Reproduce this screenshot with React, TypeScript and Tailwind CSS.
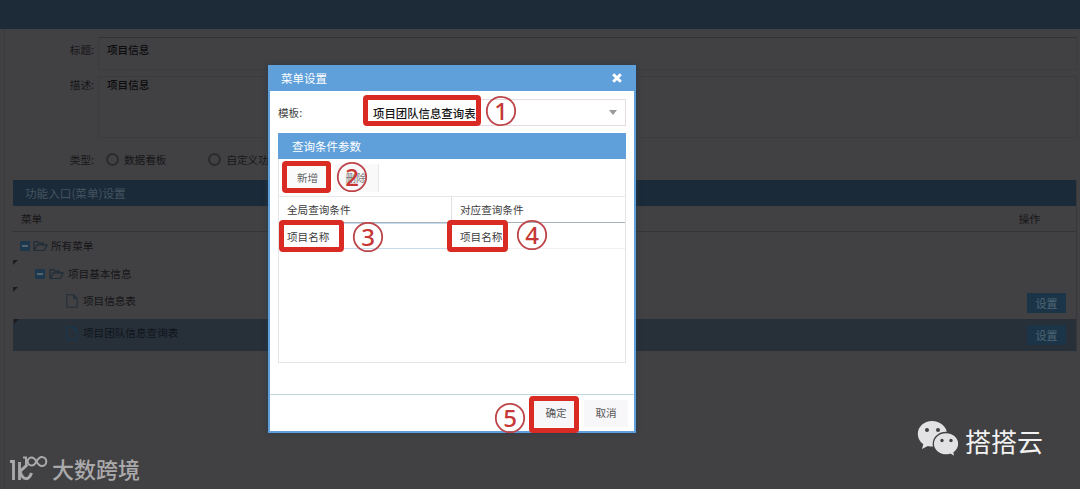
import React from "react";

function Folder() {
  return (
    <svg width="15" height="12" viewBox="0 0 15 12" fill="none" stroke="#1f2d38" strokeWidth="1.2" strokeLinejoin="round">
      <path d="M3.2 10.5 1 9.8V1.6h3.6l1.2 1.5h4.7v1.7M1.3 10.3 4.2 4.8h10l-3 5.7H1.3z" />
    </svg>
  );
}

function Doc({ color }: { color: string }) {
  return (
    <svg width="12" height="14" viewBox="0 0 12 14" fill="none" stroke={color} strokeWidth="1.1">
      <path d="M.8.8h7l3.4 3.6v8.8H.8zM7.8.8v3.6h3.4" />
    </svg>
  );
}

function Minus() {
  return (
    <span className="flex h-[10px] w-[10px] items-center justify-center rounded-[1px] bg-[#1d384d]">
      <span className="h-[2px] w-[6px] bg-[#526470]" />
    </span>
  );
}

function Corner({ className }: { className: string }) {
  return (
    <svg className={"absolute left-px " + className} width="5" height="5" viewBox="0 0 5 5">
      <path d="M0 0h5L0 5z" fill="#1d1d1f" />
    </svg>
  );
}

function Radio({ label }: { label: string }) {
  return (
    <span className="flex items-center">
      <span className="mr-[5px] h-[13px] w-[13px] rounded-full border-2 border-[#2b2b2d]" />
      {label}
    </span>
  );
}

function Frame({ className }: { className: string }) {
  return <div className={"absolute rounded-[4px] border-[5px] border-[#da2a24] " + className} />;
}

function Step({ n, className }: { n: string; className: string }) {
  return (
    <svg className={"absolute overflow-visible " + className} width="32" height="32" viewBox="0 0 32 32">
      <circle cx="16" cy="16" r="14.2" fill="none" stroke="#bd4448" strokeWidth="1.8" />
      <text x="16" y="24.500" textAnchor="middle" fontSize="24" fontWeight="500" fill="#c63735" fontFamily="'Noto Sans', sans-serif">
        {n}
      </text>
    </svg>
  );
}

function SetButton() {
  return (
    <span className="flex h-5 w-[39px] items-center justify-center bg-[#1b3448] text-[11px] text-[#4f6674]">设置</span>
  );
}

function Page() {
  return (
    <div className="flex h-full flex-col text-[10.6px] leading-[14px] text-[#161618]">
      <div className="h-[29px] shrink-0 bg-[#1c2b37]" />
      <div className="ml-[4px] flex grow flex-col border-l border-[#3a393b] pt-[8px] pl-[8px] pr-[3px]">
        <div className="flex h-[33px]">
          <span className="w-[85px] pr-[4px] pt-[6px] text-right">标题:</span>
          <div className="grow border border-[#3c3b3d] border-t-[#343334] pl-[8px] pt-[5px] font-medium text-[#0c0c0e]">项目信息</div>
        </div>
        <div className="mt-[6px] flex h-[62px]">
          <span className="w-[85px] pr-[4px] pt-[2px] text-right">描述:</span>
          <div className="grow border border-[#3c3b3d] pl-[8px] pt-px font-medium text-[#0c0c0e]">项目信息</div>
        </div>
        <div className="flex h-[42px] items-center pt-px">
          <span className="w-[85px] pr-[4px] text-right">类型:</span>
          <div className="flex gap-[42px] pl-[8px]">
            <Radio label="数据看板" />
            <Radio label="自定义功能" />
          </div>
        </div>
        <div className="-ml-px flex flex-col border-r border-[#38383a]">
          <div className="ml-px flex h-[26px] items-center bg-[#1b2a39] pl-[12px] text-[11.6px] text-[#44545f]">功能入口(菜单)设置</div>
          <div className="flex h-[26px] items-center justify-between border-b border-[#333539] pl-[9px] pr-[36px] pt-px">
            <span>菜单</span>
            <span>操作</span>
          </div>
          <div className="flex h-[28px] items-center pl-[8px]">
            <Minus />
            <span className="mx-[3px]"><Folder /></span>
            所有菜单
          </div>
          <div className="relative flex h-[27px] items-center pl-[23px]">
            <Corner className="top-0" />
            <Minus />
            <span className="mx-[4px]"><Folder /></span>
            项目基本信息
          </div>
          <div className="relative flex h-[32px] items-center pl-[54px] pr-[10px]">
            <Corner className="top-0" />
            <div className="flex grow items-center gap-[5px] pb-[5px]"><Doc color="#232f39" />项目信息表</div>
            <SetButton />
          </div>
          <div className="relative ml-px flex h-[32px] items-center bg-[#272f39] pl-[53px] pr-[10px] text-[#0f151b]">
            <Corner className="top-0" />
            <div className="flex grow items-center gap-[5px] pb-[4px]"><Doc color="#19384f" />项目团队信息查询表</div>
            <SetButton />
          </div>
        </div>
      </div>
    </div>
  );
}

function Dialog() {
  return (
    <div className="absolute left-[268px] top-[65px] flex h-[368px] w-[368px] flex-col border-2 border-t-0 border-[#5f9fda] bg-white text-[10.6px] leading-[14px] text-[#3c3c3c] shadow-[0_0_4px_#263c50]">
      <div className="flex h-[26px] shrink-0 items-center justify-between bg-[#5f9fda] pl-[11px] pr-[12px] text-[11.5px] text-white">
        菜单设置
        <svg width="10" height="10" viewBox="0 0 10 10" stroke="#fff" strokeWidth="3"><path d="m1.2 1.2 7.6 7.6M8.8 1.2 1.2 8.8" /></svg>
      </div>
      <div className="flex grow flex-col px-[8px] pt-[8px]">
        <div className="flex h-[27px] shrink-0 items-center">
          <span className="w-[87px]">模板:</span>
          <div className="flex h-full grow items-center justify-between border border-[#e4dcdf] pl-[7px] pr-[8px] font-medium text-[#161616]">
            <span className="text-[11.4px]">项目团队信息查询表</span>
            <span className="border-x-[4px] border-t-[5px] border-x-transparent border-t-[#999]" />
          </div>
        </div>
        <div className="mt-[7px] flex h-[230px] flex-col border border-t-0 border-[#e3e5e8]">
          <div className="-mx-px flex h-[26px] shrink-0 items-center bg-[#5f9fda] pl-[14px] text-[11.5px] text-white">查询条件参数</div>
          <div className="flex h-[37px] shrink-0 items-center gap-[4px] pl-[6px]">
            <span className="flex h-[28px] w-[45px] items-center justify-center bg-[#fafafb] text-[#666]">新增</span>
            <span className="flex h-[28px] w-[45px] items-center justify-center border-r border-[#e8e8e8] bg-[#f9f9fa] text-[#777]">删除</span>
          </div>
          <div className="flex h-[27px] shrink-0 border-y border-t-[#e5e7e9] border-b-[#abb1b8]">
            <span className="flex w-[173px] items-center border-r border-[#e0e2e4] pl-[8px]">全局查询条件</span>
            <span className="flex items-center pl-[8px]">对应查询条件</span>
          </div>
          <div className="flex h-[26px] shrink-0">
            <span className="flex w-[173px] items-center border-y border-r border-[#c7dcec] pl-[8px] pt-px">项目名称</span>
            <span className="flex grow items-center border-b border-[#f0f1f2] pl-[8px] pt-[2px]">项目名称</span>
          </div>
        </div>
      </div>
      <div className="flex h-[37px] shrink-0 items-center justify-end gap-[6px] border-t border-[#bdd9dc] pr-[6px] text-[#555]">
        <span className="flex h-[27px] w-[44px] items-center justify-center bg-[#f7f6f8]">确定</span>
        <span className="flex h-[27px] w-[44px] items-center justify-center bg-[#f7f6f8]">取消</span>
      </div>
    </div>
  );
}

export default function App() {
  return (
    <div className="relative h-[489px] w-[1080px] overflow-hidden bg-[#414042] font-['Noto_Sans_CJK_SC',sans-serif]">
      <Page />
      <Dialog />
      <Frame className="left-[363px] top-[95px] h-[31px] w-[118px]" />
      <Frame className="left-[282px] top-[161px] h-[32px] w-[49px]" />
      <Frame className="left-[279px] top-[220px] h-[32px] w-[65px]" />
      <Frame className="left-[447px] top-[220px] h-[32px] w-[61px]" />
      <Frame className="left-[529px] top-[396px] h-[37px] w-[50px]" />
      <Step n="1" className="left-[485px] top-[95px]" />
      <Step n="2" className="left-[336px] top-[161px]" />
      <Step n="3" className="left-[352px] top-[221px]" />
      <Step n="4" className="left-[516px] top-[219px]" />
      <Step n="5" className="left-[494px] top-[402px]" />
      <div className="absolute left-[917px] top-[420px] flex items-start">
        <svg width="43" height="38" viewBox="0 0 43 38">
          <path d="M15 1C7 1 .8 6.600.8 14c0 4.300 2.100 7.700 5.500 10.200L5 29l5.800-3c1.500.4 3 .6 4.600.6C22.800 26 30 21 30 14 30 6.600 23 1 15 1z" fill="#e2e2e4" />
          <path d="M29 12.500c-7 0-12.700 5-12.700 11.300S22 35 29 35c1.500 0 3-.3 4.400-.7l4.600 2.700-1-4.200c3-2.200 4.800-5.300 4.800-9 0-6.300-5.800-11.300-12.800-11.300z" fill="#e2e2e4" stroke="#414042" strokeWidth="1.300" />
          <g fill="#414042"><circle cx="10" cy="10" r="2" /><circle cx="21" cy="10" r="2" /><circle cx="25" cy="20.500" r="1.700" /><circle cx="34" cy="20.500" r="1.700" /></g>
        </svg>
        <span className="ml-[5px] text-[26px] leading-[42px] text-[#f2f2f2]">搭搭云</span>
      </div>
      <div className="absolute left-[9px] top-[453px] flex items-center text-[#aaa9ab]">
        <svg width="39" height="28" viewBox="0 0 39 28" fill="none" stroke="#aaa9ab">
          <path d="M1 7.500H4.500V26" strokeWidth="2.800" />
          <path d="M10.500 8v18" strokeWidth="2.800" />
          <path d="M18.500 10.500 11 17.500C14 27 20 26.500 22.500 19" strokeWidth="3" />
          <path d="M14 3.500H17v8" strokeWidth="2" />
          <path d="M27.500 7.500C25.800 4.500 24.500 3.500 22.700 3.500a4 4 0 0 0 0 8c1.800 0 3.100-1 4.800-4s3-4.500 5.300-4.500a4.500 4.500 0 0 1 0 9c-2.300 0-3.600-1.500-5.300-4.500z" strokeWidth="2" />
        </svg>
        <span className="ml-[4px] text-[22px] font-medium leading-[30px]">大数跨境</span>
      </div>
    </div>
  );
}
